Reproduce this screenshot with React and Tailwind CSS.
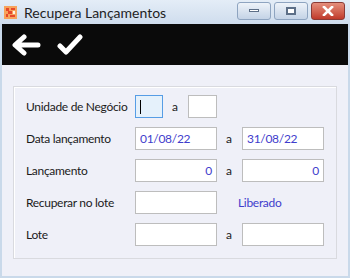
import React from "react";

const Field = ({ width = "w-[82px]", value, align = "left", focused = false }) => (
  <div
    className={`${width} h-[23px] flex items-center px-[4px] border ${
      focused ? "border-[#569de5] bg-[#e5f1fb]" : "border-[#bdbdbd] bg-white"
    } ${align === "right" ? "justify-end" : "justify-start"}`}
  >
    {focused && <div className="w-px h-[14px] bg-black" />}
    {value && <span className="text-[#3f3dcc]">{value}</span>}
  </div>
);

const Ate = () => <span className="w-[25px] pl-[9px] text-[#1b1b1b]">a</span>;

const Row = ({ label, children }) => (
  <div className="flex items-center h-[23px]">
    <span className="w-[109px] whitespace-nowrap text-[#1b1b1b]">{label}</span>
    {children}
  </div>
);

export default function App() {
  return (
    <div
      className="w-[350px] h-[278px] flex flex-col bg-[#c9d9ea] text-[12px] tracking-[-0.3px] overflow-hidden"
      style={{ fontFamily: 'Lato, "Noto Sans", sans-serif' }}
    >
      {/* barra de título */}
      <div className="h-[24px] flex items-center bg-gradient-to-b from-[#e4edf7] to-[#cfdded] pl-[4px] pr-[5px]">
        <svg width="13" height="13" viewBox="0 0 13 13" className="shrink-0">
          <rect width="13" height="13" fill="#f7a35c" />
          <rect x="2" y="2" width="3" height="3" fill="#e6482b" />
          <rect x="7" y="2" width="4" height="2" fill="#e6482b" />
          <rect x="4" y="5" width="4" height="3" fill="#e6482b" />
          <rect x="2" y="8" width="2" height="3" fill="#e6482b" />
          <rect x="6" y="9" width="5" height="2" fill="#e6482b" />
          <rect x="9" y="5" width="2" height="3" fill="#fff3e0" />
        </svg>
        <span className="ml-[7px] text-[14px] tracking-normal text-[#1e1e1e]">Recupera Lançamentos</span>
        <div className="ml-auto flex gap-[3px] mt-[-3px]">
          <div className="w-[34px] h-[18px] rounded-[3px] border border-[#8ea4c0] bg-gradient-to-b from-[#eef3f9] to-[#c4d3e6] flex items-center justify-center">
            <div className="w-[10px] h-[3px] bg-white border border-[#5d6f87]" />
          </div>
          <div className="w-[34px] h-[18px] rounded-[3px] border border-[#8ea4c0] bg-gradient-to-b from-[#eef3f9] to-[#c4d3e6] flex items-center justify-center">
            <div className="w-[10px] h-[8px] bg-white border-2 border-[#5d6f87]" />
          </div>
          <div className="w-[34px] h-[18px] rounded-[3px] border border-[#8b3b36] bg-gradient-to-b from-[#e48e7c] to-[#c0392b] flex items-center justify-center">
            <svg width="12" height="10" viewBox="0 0 12 10">
              <path d="M2 1 L10 9 M10 1 L2 9" stroke="#fff" strokeWidth="2.6" strokeLinecap="square" />
            </svg>
          </div>
        </div>
      </div>

      {/* corpo */}
      <div className="flex-1 flex flex-col mx-[2px] mb-[2px] bg-[#eff0f8]">
        {/* barra de ferramentas */}
        <div className="h-[41px] bg-[#0a0a0a] flex items-center pl-[9px] gap-[16px]">
          <svg width="30" height="22" viewBox="0 0 30 22">
            <path
              d="M27 11 H5 M13 3 L4 11 L13 19"
              fill="none"
              stroke="#fff"
              strokeWidth="5"
              strokeLinecap="round"
              strokeLinejoin="round"
            />
          </svg>
          <svg width="26" height="22" viewBox="0 0 26 22">
            <path
              d="M3 12 L9 18 L23 3"
              fill="none"
              stroke="#fff"
              strokeWidth="5"
              strokeLinecap="round"
              strokeLinejoin="round"
            />
          </svg>
        </div>

        <div className="mt-[21px] mx-[11px] border border-[#d9dadf] shadow-[inset_1px_1px_0_#fff] pt-[8px] pb-[12px] pl-[12px] flex flex-col gap-[9px]">
          <Row label="Unidade de Negócio">
            <Field width="w-[28px]" focused />
            <Ate />
            <Field width="w-[29px]" />
          </Row>
          <Row label="Data lançamento">
            <Field value="01/08/22" />
            <Ate />
            <Field value="31/08/22" />
          </Row>
          <Row label="Lançamento">
            <Field value="0" align="right" />
            <Ate />
            <Field value="0" align="right" />
          </Row>
          <Row label="Recuperar no lote">
            <Field />
            <span className="pl-[21px] text-[#3f3dcc]">Liberado</span>
          </Row>
          <Row label="Lote">
            <Field />
            <Ate />
            <Field />
          </Row>
        </div>
      </div>
    </div>
  );
}
